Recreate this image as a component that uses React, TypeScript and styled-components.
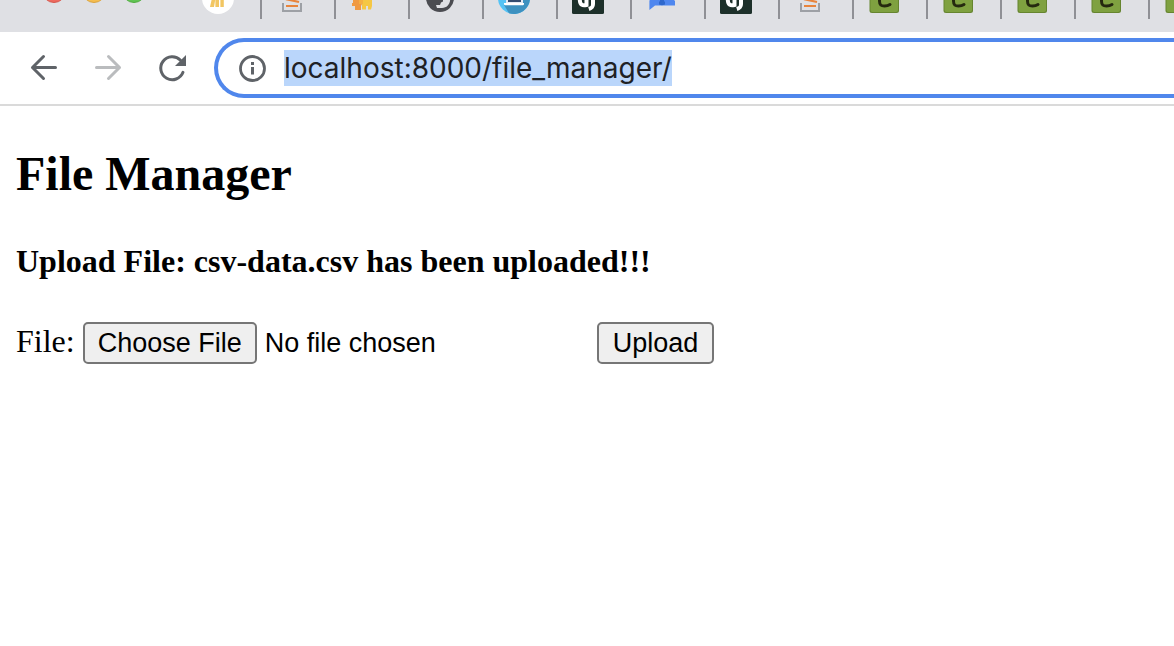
import React from "react";
import styled, { createGlobalStyle } from "styled-components";

const GlobalStyle = createGlobalStyle`
  *, *::before, *::after { box-sizing: border-box; }
  body {
    margin: 0;
    background: #fff;
    color: #000;
    font-family: "Liberation Serif", "Times New Roman", serif;
    overflow-x: hidden;
  }
`;

const TabStrip = styled.nav`
  display: flex;
  align-items: flex-start;
  height: 32px;
  overflow: hidden;
  background: #dfe0e4;
`;

const WindowControls = styled.div`
  display: flex;
  flex: none;
  gap: 16px;
  width: 188px;
  padding-left: 42px;
`;

const ControlButton = styled.button`
  display: block;
  width: 24px;
  height: 4px;
  padding: 0;
  border: 0;
  background: none;
`;

const Tab = styled.button`
  flex: none;
  width: 74px;
  height: 19px;
  padding: 0 14px;
  border: 0;
  border-right: 2px solid #8f9095;
  background: none;
`;

const TabIcon = styled.svg`
  display: block;
  width: 32px;
  height: 19px;
`;

const Toolbar = styled.header`
  display: flex;
  align-items: center;
  height: 74px;
  padding-left: 28px;
  border-bottom: 2px solid #dadada;
`;

const NavButton = styled.button<{ $dim?: boolean }>`
  flex: none;
  width: 32px;
  height: 32px;
  margin-right: 32px;
  padding: 0;
  border: 0;
  background: none;
  color: ${(p) => (p.$dim ? "#babcbe" : "#5f6368")};

  &:last-of-type { margin-right: 26px; }
  svg { display: block; width: 32px; height: 32px; }
`;

const AddressBar = styled.div`
  display: flex;
  flex: 1;
  align-items: center;
  gap: 16px;
  height: 60px;
  padding-left: 20px;
  border: 4px solid #5087ec;
  border-right: 0;
  border-radius: 30px 0 0 30px;
  color: #5f6368;

  svg { flex: none; width: 30px; height: 30px; }
`;

const AddressInput = styled.input`
  field-sizing: content;
  height: 36px;
  padding: 0;
  border: 0;
  outline: 0;
  background: #bad6fb;
  color: #202124;
  font: 28px/36px Inter, "Liberation Sans", sans-serif;
`;

const Page = styled.main`
  padding: 40px 16px;
`;

const Title = styled.h2`
  margin: 0 0 40px;
  font-size: 48px;
  line-height: 56px;
`;

const Message = styled.h4`
  margin: 0 0 42px;
  font-size: 32px;
  line-height: 38px;
`;

const UploadForm = styled.form`
  display: flex;
  align-items: flex-start;
  gap: 8px;
  font-size: 32px;
  line-height: 38px;
`;

const FileInput = styled.input`
  width: 506px;
  height: 42px;
  color: #000;
  font: 27px/38px "Liberation Sans", Arial, sans-serif;

  &::file-selector-button {
    height: 42px;
    margin: 0 8px 0 0;
    padding: 0 13px;
    border: 2px solid #767676;
    border-radius: 5px;
    background: #efefef;
    color: #000;
    font: inherit;
  }
`;

const SubmitButton = styled.button`
  height: 42px;
  padding: 0 14px;
  border: 2px solid #767676;
  border-radius: 5px;
  background: #efefef;
  color: #000;
  font: 27px/38px "Liberation Sans", Arial, sans-serif;
`;

const controls = [
  { name: "Close", fill: "#ee6a5f", edge: "#d5574d" },
  { name: "Minimize", fill: "#f5bd4f", edge: "#dba33c" },
  { name: "Zoom", fill: "#61c454", edge: "#4fac3d" },
];

const icons = {
  analytics: (
    <>
      <circle cx="16" cy="16" r="16" fill="#fff" />
      <path d="M8 25 10 16h3.5L12 25zM13.4 16h3.6v9h-3.6zM18.4 16h3.4v9h-3.4z" fill="#f2c662" />
    </>
  ),
  stack: (
    <>
      <path d="M7 21v8h18v-8" fill="none" stroke="#9da0a5" strokeWidth="2" />
      <path d="M10 24h12M10 17.2l13 2.8" fill="none" stroke="#e8843c" strokeWidth="2.2" />
    </>
  ),
  elephant: (
    <>
      <path d="M3 16h9v6l-1 2v4H5v-4H2v-3h1z" fill="#f09a43" />
      <path d="M11 16h11v8l-1 3.500h-3V24h-2v3.500h-4V22h-1z" fill="#f5c744" />
      <path d="M9 17h4v5H9z" fill="#f4b044" />
    </>
  ),
  globe: (
    <>
      <circle cx="16" cy="16" r="14" fill="#4b4c51" />
      <path d="M26.300 16c0 6-3 9.800-8.300 10h-5l-1-3h4l1-2.500 2-1V16z" fill="#dfe0e4" />
    </>
  ),
  laptop: (
    <>
      <circle cx="16" cy="16" r="16" fill="#55c3f5" />
      <path d="M26 16h6a16 16 0 0 1-21 15.200L6 23z" fill="#3d91c0" />
      <path d="M8 14h17v7H8z" fill="#e3eaf4" />
      <path d="M10 14h13v6H10z" fill="#344c70" />
      <path d="M6 21h20v1.500l-1 .7H7l-1-.7z" fill="#fff" />
    </>
  ),
  django: (
    <>
      <rect width="32" height="32" rx="1.500" fill="#1d302a" />
      <path d="M14.500 14v9c-4 1-6.700 0-6.700-5.500" fill="none" stroke="#fff" strokeWidth="4" />
      <path d="M21 14v8c0 3-1 4-4.200 5" fill="none" stroke="#fff" strokeWidth="4" />
    </>
  ),
  person: (
    <>
      <path d="M4 17h23l2 2v4.600H9L3.400 28v-9z" fill="#4f87ef" />
      <path d="M14 16h4v3l1 1v2.500l-3 .7-3-.7V20l1-1z" fill="#2f68cc" />
    </>
  ),
  green: (
    <>
      <rect x="1.500" y="1" width="29.500" height="30" rx="2.500" fill="#66852f" />
      <rect x="2.500" y="2" width="27.500" height="28" rx="2" fill="#7fa140" />
      <path d="M11.500 10v9c0 4 1.500 5 5 5 2.500 0 4-.5 5.500-1.500" fill="none" stroke="#25290f" strokeWidth="3" strokeLinecap="round" />
    </>
  ),
};

const tabs: { name: string; icon: keyof typeof icons }[] = [
  { name: "Analytics", icon: "analytics" },
  { name: "Stack Overflow", icon: "stack" },
  { name: "Elephant", icon: "elephant" },
  { name: "Globe", icon: "globe" },
  { name: "Laptop", icon: "laptop" },
  { name: "Django", icon: "django" },
  { name: "Contact", icon: "person" },
  { name: "Django", icon: "django" },
  { name: "Stack Overflow", icon: "stack" },
  { name: "Celery", icon: "green" },
  { name: "Celery", icon: "green" },
  { name: "Celery", icon: "green" },
  { name: "Celery", icon: "green" },
  { name: "Celery", icon: "green" },
];

export default function App() {
  return (
    <>
      <GlobalStyle />
      <TabStrip aria-label="Tabs">
        <WindowControls>
          {controls.map((c) => (
            <ControlButton key={c.name} aria-label={c.name}>
              <svg width="24" height="4" viewBox="0 20 24 4" display="block">
                <circle cx="12" cy="11" r="11.500" fill={c.fill} stroke={c.edge} />
              </svg>
            </ControlButton>
          ))}
        </WindowControls>
        {tabs.map((t, i) => (
          <Tab key={i} aria-label={t.name}>
            <TabIcon viewBox="0 18 32 19">{icons[t.icon]}</TabIcon>
          </Tab>
        ))}
      </TabStrip>

      <Toolbar>
        <NavButton aria-label="Back">
          <svg viewBox="0 0 32 32" fill="none" stroke="currentColor" strokeWidth="3" strokeLinecap="round" strokeLinejoin="round">
            <path d="M27.500 15.500H4.500M15.500 4.500l-11 11 11 11" />
          </svg>
        </NavButton>
        <NavButton aria-label="Forward" $dim>
          <svg viewBox="0 0 32 32" fill="none" stroke="currentColor" strokeWidth="3" strokeLinecap="round" strokeLinejoin="round">
            <path d="M4.500 15.500h23M16.500 4.500l11 11-11 11" />
          </svg>
        </NavButton>
        <NavButton aria-label="Reload">
          <svg viewBox="0 0 32 32" fill="none" stroke="currentColor" strokeWidth="3" strokeLinecap="round">
            <path d="M27 20.300A11.500 11.500 0 1 1 24.500 8.200" />
            <path d="M30 3v11H19z" fill="currentColor" stroke="none" />
          </svg>
        </NavButton>
        <AddressBar>
          <svg viewBox="0 0 30 30" fill="none" stroke="currentColor" strokeWidth="2.800">
            <circle cx="14.500" cy="15.500" r="12" />
            <path d="M14.500 14v7.500M14.500 9v3" strokeWidth="3" />
          </svg>
          <AddressInput aria-label="Address" defaultValue="localhost:8000/file_manager/" />
        </AddressBar>
      </Toolbar>

      <Page>
        <Title>File Manager</Title>
        <Message>Upload File: csv-data.csv has been uploaded!!!</Message>
        <UploadForm onSubmit={(e) => e.preventDefault()}>
          <label htmlFor="file">File:</label>
          <FileInput id="file" type="file" />
          <SubmitButton type="submit">Upload</SubmitButton>
        </UploadForm>
      </Page>
    </>
  );
}
